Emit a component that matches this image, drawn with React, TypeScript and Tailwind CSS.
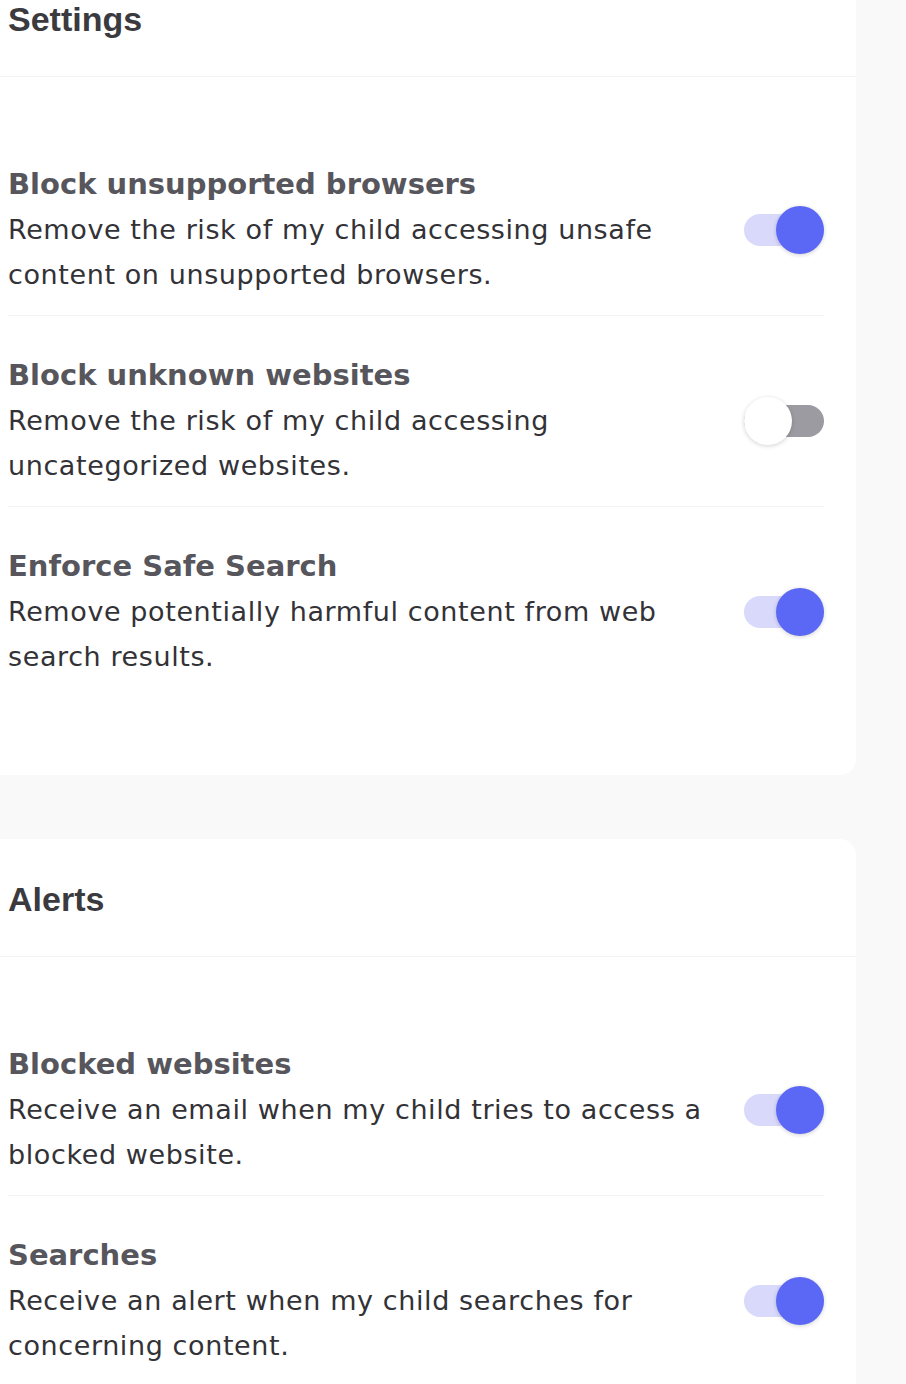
import React, { useState } from 'react';

type Item = { id: string; title: string; text: string; on: boolean };

const settingsItems: Item[] = [
  { id: 'browsers', title: 'Block unsupported browsers', text: 'Remove the risk of my child accessing unsafe content on unsupported browsers.', on: true },
  { id: 'unknown', title: 'Block unknown websites', text: 'Remove the risk of my child accessing uncategorized websites.', on: false },
  { id: 'safe', title: 'Enforce Safe Search', text: 'Remove potentially harmful content from web search results.', on: true },
];

const alertItems: Item[] = [
  { id: 'blocked', title: 'Blocked websites', text: 'Receive an email when my child tries to access a blocked website.', on: true },
  { id: 'searches', title: 'Searches', text: 'Receive an alert when my child searches for concerning content.', on: true },
];

const Toggle: React.FC<{ on: boolean; onChange: () => void }> = ({ on, onChange }) => (
  <button
    onClick={onChange}
    className={`relative shrink-0 w-[80px] h-[32px] rounded-full ${on ? 'bg-[#d8d9fb]' : 'bg-[#9b9ba1]'}`}
  >
    <span
      className={`absolute top-[-8px] w-[48px] h-[48px] rounded-full shadow-[0_1px_4px_rgba(0,0,0,0.18)] ${
        on ? 'right-0 bg-[#5b67f5]' : 'left-0 bg-white'
      }`}
    />
  </button>
);

const Card: React.FC<{ title: string; items: Item[]; className?: string }> = ({ title, items, className }) => {
  const [state, setState] = useState<Record<string, boolean>>(
    Object.fromEntries(items.map((i) => [i.id, i.on]))
  );

  return (
    <div className={`bg-white rounded-r-[16px] ${className || ''}`}>
      <div className="pl-2 pt-[40px] pb-[37px] border-b border-[#f4f4f4]">
        <h2 className="font-['Liberation_Sans',Arial,sans-serif] text-[34px] leading-[40px] font-bold text-[#3a3a3f]">
          {title}
        </h2>
      </div>
      <div className="pt-[48px] pb-[78px] pl-2 pr-[32px]">
        {items.map((item, idx) => (
          <div
            key={item.id}
            className={`flex items-center gap-6 pt-[37px] pb-[18px] ${
              idx < items.length - 1 ? 'border-b border-[#f4f4f4]' : ''
            }`}
          >
            <div className="flex-1">
              <h3 className="text-[29px] leading-[45px] font-bold text-[#56565c]">{item.title}</h3>
              <p className="text-[27px] leading-[45px] tracking-[0.6px] text-[#323237]">{item.text}</p>
            </div>
            <Toggle
              on={state[item.id]}
              onChange={() => setState((s) => ({ ...s, [item.id]: !s[item.id] }))}
            />
          </div>
        ))}
      </div>
    </div>
  );
};

export default function App() {
  return (
    <div className="min-h-screen bg-[#f9f9f9] overflow-hidden font-['DejaVu_Sans',sans-serif]">
      <div className="w-[856px] -mt-[41px]">
        <Card title="Settings" items={settingsItems} />
        <Card title="Alerts" items={alertItems} className="mt-[64px]" />
      </div>
    </div>
  );
}
